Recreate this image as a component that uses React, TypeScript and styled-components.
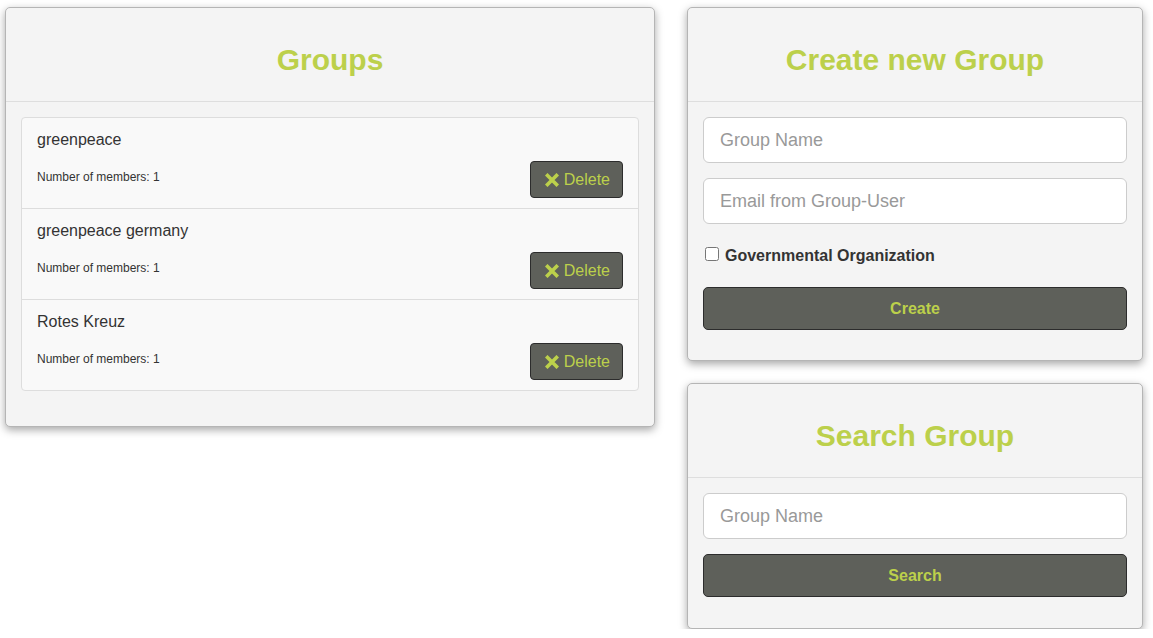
import React from 'react';
import styled, { createGlobalStyle } from 'styled-components';

const GlobalStyle = createGlobalStyle`
  * { box-sizing: border-box; }
  body {
    margin: 0;
    background: #fff;
    font-family: "Liberation Sans", Arial, Helvetica, sans-serif;
    color: #333;
  }
`;

const Page = styled.div`
  display: flex;
  align-items: flex-start;
  gap: 32px;
  padding: 7px 0 0 5px;
`;

const Column = styled.div<{ $width: number }>`
  flex: 0 0 ${(p) => p.$width}px;
  width: ${(p) => p.$width}px;
  display: flex;
  flex-direction: column;
  gap: 22px;
`;

const Panel = styled.section`
  background: #f4f4f4;
  border: 1px solid #b5b5b5;
  border-radius: 5px;
  box-shadow: 0 3px 8px rgba(0, 0, 0, 0.35);
`;

const PanelHeader = styled.div`
  padding: 15px;
  border-bottom: 1px solid #dedede;
  text-align: center;
`;

const Title = styled.h2`
  margin: 20px 0 10px;
  font-size: 30px;
  line-height: 33px;
  font-weight: bold;
  color: #bcd04b;
`;

const PanelBody = styled.div<{ $bottom?: number }>`
  padding: 15px 15px ${(p) => p.$bottom ?? 15}px;
`;

const List = styled.ul`
  list-style: none;
  margin: 0 0 20px;
  padding: 0;
`;

const Item = styled.li`
  background: #f9f9f9;
  border: 1px solid #dddddd;
  margin-bottom: -1px;
  padding: 11px 15px 10px 15px;

  &:first-child {
    border-radius: 4px 4px 0 0;
  }
  &:last-child {
    border-radius: 0 0 4px 4px;
    margin-bottom: 0;
  }
`;

const GroupName = styled.div`
  font-size: 16px;
  line-height: 22px;
  margin-bottom: 10px;
`;

const ItemRow = styled.div`
  display: flex;
  align-items: center;
  justify-content: space-between;
`;

const Members = styled.span`
  font-size: 12px;
  padding-bottom: 6px;
`;

const DeleteButton = styled.button`
  display: inline-flex;
  align-items: center;
  gap: 5px;
  height: 37px;
  padding: 0 12px 0 14px;
  background: #5e605a;
  border: 1px solid #2c2c2c;
  border-radius: 4px;
  color: #bcd04b;
  font-family: inherit;
  font-size: 16px;
`;

const Input = styled.input`
  display: block;
  width: 100%;
  height: 46px;
  padding: 10px 16px;
  font-family: inherit;
  font-size: 18px;
  color: #555;
  background: #fff;
  border: 1px solid #cccccc;
  border-radius: 6px;
  margin-bottom: 15px;

  &::placeholder {
    color: #999;
  }
`;

const CheckRow = styled.label`
  display: flex;
  align-items: center;
  gap: 6px;
  margin: 22px 0 21px 2px;
  font-size: 16px;
  font-weight: bold;
  line-height: 20px;
  color: #333;
`;

const Check = styled.input`
  width: 14px;
  height: 14px;
  margin: 0 0 4px;
`;

const WideButton = styled.button`
  display: block;
  width: 100%;
  height: 43px;
  background: #5e605a;
  border: 1px solid #2c2c2c;
  border-radius: 5px;
  color: #bcd04b;
  font-family: inherit;
  font-size: 16px;
  font-weight: bold;
`;

const RemoveIcon = () => (
  <svg width="14" height="14" viewBox="0 0 14 14" aria-hidden="true">
    <path d="M2.5 2.5 L11.5 11.5 M11.5 2.5 L2.5 11.5" stroke="#bcd04b" strokeWidth="3.6" strokeLinecap="square" />
  </svg>
);

const groups = [
  { name: 'greenpeace', members: 1 },
  { name: 'greenpeace germany', members: 1 },
  { name: 'Rotes Kreuz', members: 1 },
];

export default function App() {
  return (
    <>
      <GlobalStyle />
      <Page>
        <Column $width={650}>
          <Panel>
            <PanelHeader>
              <Title>Groups</Title>
            </PanelHeader>
            <PanelBody>
              <List>
                {groups.map((g) => (
                  <Item key={g.name}>
                    <GroupName>{g.name}</GroupName>
                    <ItemRow>
                      <Members>Number of members: {g.members}</Members>
                      <DeleteButton>
                        <RemoveIcon />
                        Delete
                      </DeleteButton>
                    </ItemRow>
                  </Item>
                ))}
              </List>
            </PanelBody>
          </Panel>
        </Column>
        <Column $width={456}>
          <Panel>
            <PanelHeader>
              <Title>Create new Group</Title>
            </PanelHeader>
            <PanelBody $bottom={30}>
              <Input placeholder="Group Name" />
              <Input placeholder="Email from Group-User" />
              <CheckRow>
                <Check type="checkbox" />
                Governmental Organization
              </CheckRow>
              <WideButton>Create</WideButton>
            </PanelBody>
          </Panel>
          <Panel>
            <PanelHeader>
              <Title>Search Group</Title>
            </PanelHeader>
            <PanelBody $bottom={31}>
              <Input placeholder="Group Name" />
              <WideButton>Search</WideButton>
            </PanelBody>
          </Panel>
        </Column>
      </Page>
    </>
  );
}
